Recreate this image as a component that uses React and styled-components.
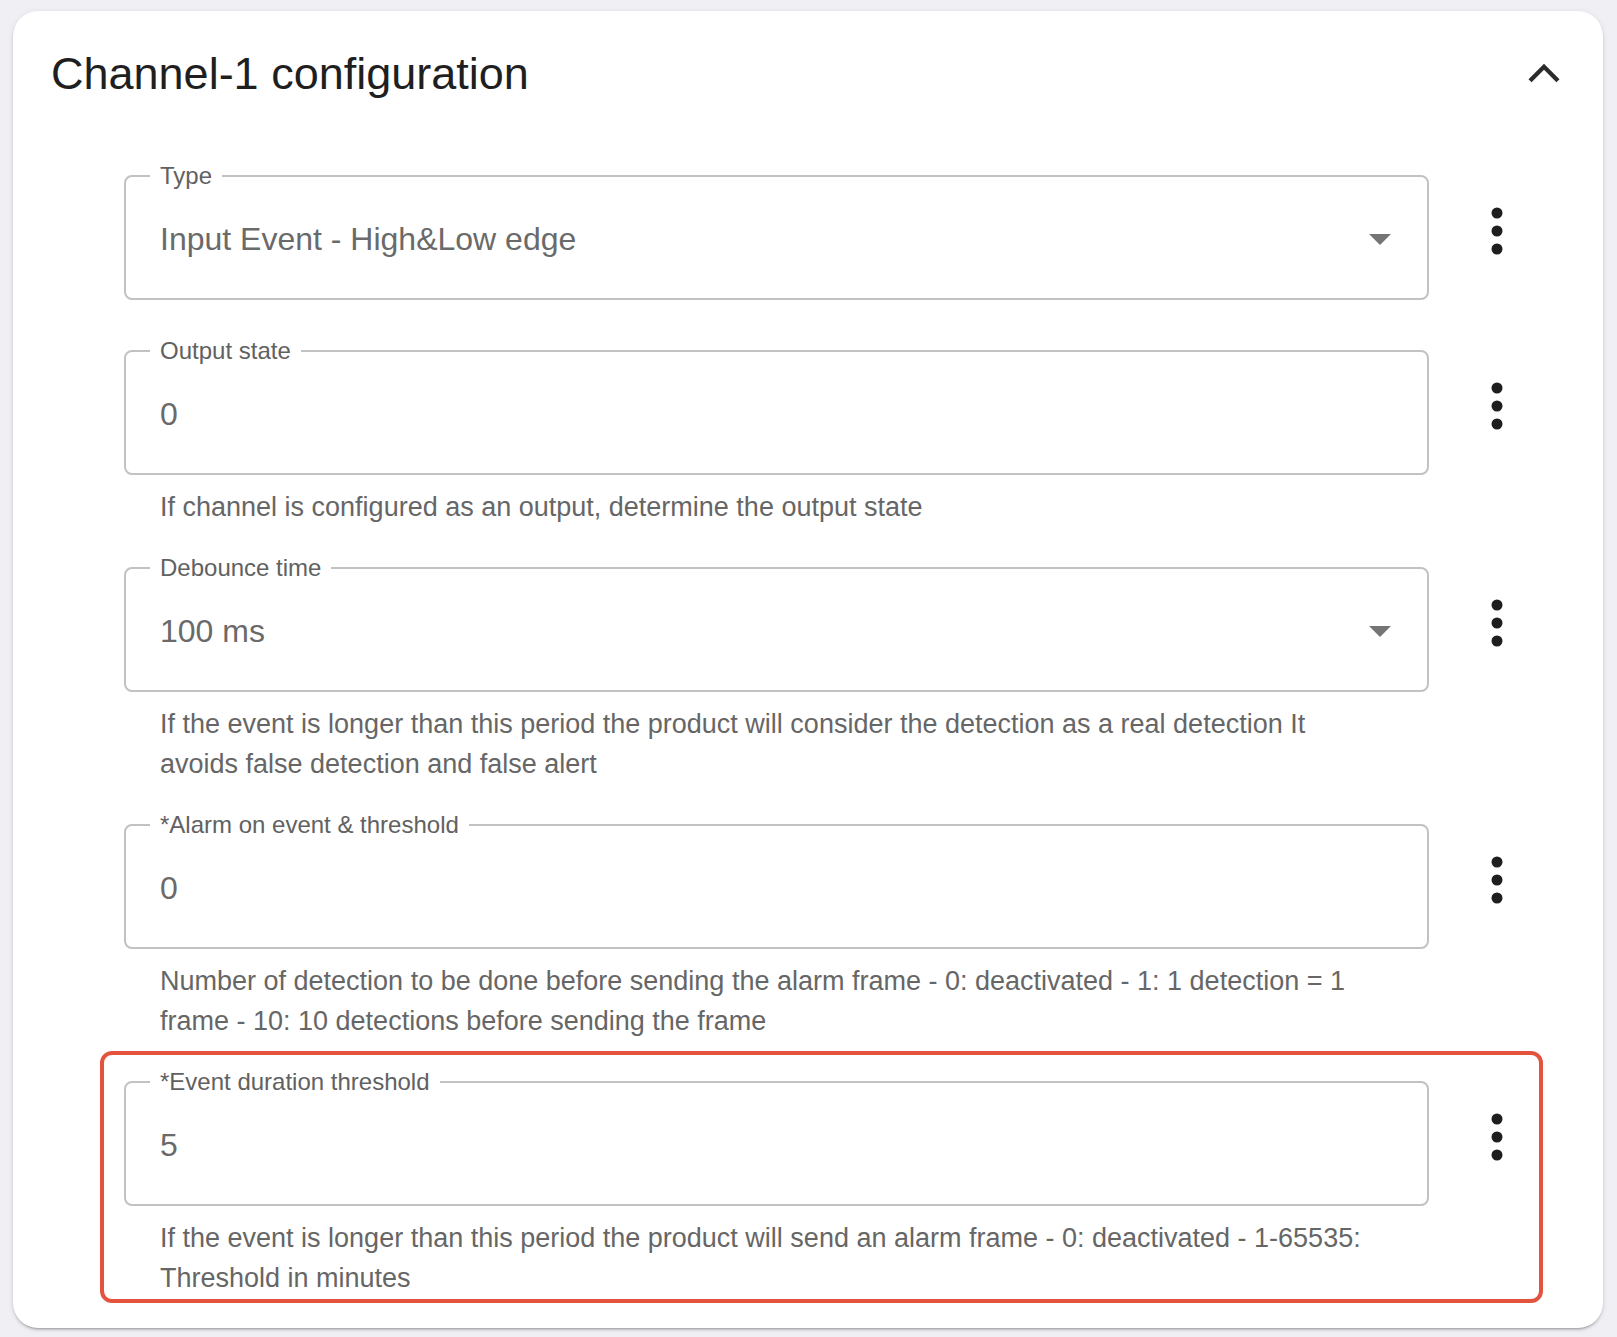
import React from 'react';
import styled, { createGlobalStyle } from 'styled-components';

const GlobalStyle = createGlobalStyle`
  html, body {
    margin: 0;
    background: #efeff4;
  }
  body {
    padding: 11px 14px 10px 13px;
    font-family: "Liberation Sans", Arial, sans-serif;
  }
`;

const Card = styled.section`
  background: #ffffff;
  border-radius: 25px;
  padding: 36px 28px 25px 38px;
  box-shadow: 0 3px 2px -2px rgba(0, 0, 0, 0.2), 0 2px 3px rgba(0, 0, 0, 0.12), 0 1px 6px rgba(0, 0, 0, 0.08);
`;

const Header = styled.div`
  display: flex;
  align-items: center;
  justify-content: space-between;
  height: 54px;
`;

const Title = styled.h2`
  margin: 0;
  font-size: 45px;
  line-height: 56px;
  font-weight: 400;
  color: #1f1f1f;
`;

const ToggleButton = styled.button`
  border: none;
  background: none;
  padding: 0;
  width: 62px;
  height: 62px;
  display: flex;
  cursor: pointer;
  color: #2c2c2c;
`;

const Fields = styled.div`
  display: flex;
  flex-direction: column;
  gap: 27px;
  margin: 61px 32px 0 49px;
`;

const Row = styled.div`
  display: flex;
  align-items: flex-start;
  padding: ${p => (p.$highlight ? '13px 6px 1px 20px' : '0 10px 0 24px')};
  padding-bottom: ${p => (p.$highlight ? '1px' : p.$noHelper ? '10px' : '0')};
  margin-top: ${p => (p.$highlight ? '-17px' : '0')};
  border: ${p => (p.$highlight ? '4px solid #e4533d' : 'none')};
  border-radius: 12px;
`;

const FieldColumn = styled.div`
  flex: 1;
  min-width: 0;
`;

const Box = styled.fieldset`
  margin: 0;
  min-width: 0;
  padding: 29px 36px 39px 24px;
  border: 2px solid #c2c2c2;
  border-radius: 8px;
`;

const Label = styled.legend`
  padding: 0 10px;
  font-size: 24px;
  line-height: 28px;
  color: #616161;
`;

const ValueRow = styled.div`
  display: flex;
  align-items: center;
  height: 40px;
  padding-left: 10px;
`;

const Value = styled.span`
  flex: 1;
  font-size: 32px;
  line-height: 40px;
  color: #6a6a6a;
`;

const Helper = styled.p`
  margin: 12px 56px 0 36px;
  font-size: 27px;
  line-height: 40px;
  color: #666666;
`;

const KebabButton = styled.button`
  flex: none;
  width: 72px;
  height: 72px;
  margin: 33px 0 0 32px;
  padding: 0;
  border: none;
  background: none;
  display: flex;
  align-items: center;
  justify-content: center;
  color: #1e1e1e;
  cursor: pointer;
`;

const ChevronUp = () => (
  <svg width="62" height="62" viewBox="0 0 24 24" fill="currentColor">
    <path d="M12 8l-6 6 1.2 1.2L12 10.4l4.8 4.8L18 14z" />
  </svg>
);

const DropArrow = () => (
  <svg width="22" height="11" viewBox="0 0 22 11" fill="#757575">
    <path d="M0 0h22L11 11z" />
  </svg>
);

const Kebab = () => (
  <svg width="12" height="48" viewBox="0 0 12 48" fill="currentColor">
    <circle cx="6" cy="6" r="5.5" />
    <circle cx="6" cy="24" r="5.5" />
    <circle cx="6" cy="42" r="5.5" />
  </svg>
);

const fields = [
  { label: 'Type', value: 'Input Event - High&Low edge', select: true },
  {
    label: 'Output state',
    value: '0',
    helper: 'If channel is configured as an output, determine the output state',
  },
  {
    label: 'Debounce time',
    value: '100 ms',
    select: true,
    helper:
      'If the event is longer than this period the product will consider the detection as a real detection It avoids false detection and false alert',
  },
  {
    label: '*Alarm on event & threshold',
    value: '0',
    helper:
      'Number of detection to be done before sending the alarm frame - 0: deactivated - 1: 1 detection = 1 frame - 10: 10 detections before sending the frame',
  },
  {
    label: '*Event duration threshold',
    value: '5',
    highlight: true,
    helper:
      'If the event is longer than this period the product will send an alarm frame - 0: deactivated - 1-65535: Threshold in minutes',
  },
];

export default function App() {
  return (
    <>
      <GlobalStyle />
      <Card>
        <Header>
          <Title>Channel-1 configuration</Title>
          <ToggleButton aria-label="collapse">
            <ChevronUp />
          </ToggleButton>
        </Header>
        <Fields>
          {fields.map(f => (
            <Row key={f.label} $highlight={f.highlight} $noHelper={!f.helper}>
              <FieldColumn>
                <Box>
                  <Label>{f.label}</Label>
                  <ValueRow>
                    <Value>{f.value}</Value>
                    {f.select && <DropArrow />}
                  </ValueRow>
                </Box>
                {f.helper && <Helper>{f.helper}</Helper>}
              </FieldColumn>
              <KebabButton aria-label="more">
                <Kebab />
              </KebabButton>
            </Row>
          ))}
        </Fields>
      </Card>
    </>
  );
}
